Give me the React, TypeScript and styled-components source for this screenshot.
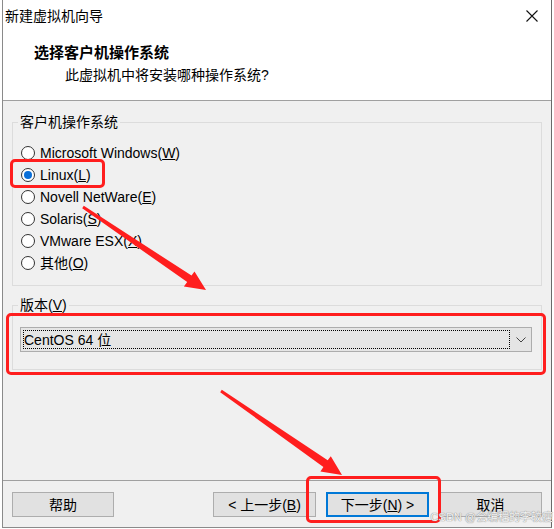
import React from "react";
import styled, { createGlobalStyle } from "styled-components";

const FONT = `"Liberation Sans", "Noto Sans CJK SC", sans-serif`;

const Global = createGlobalStyle`
  html, body { margin: 0; padding: 0; background: #ffffff; }
  body { font-family: ${FONT}; font-size: 14px; color: #000; }
  * { box-sizing: border-box; }
`;

const Stage = styled.div`
  position: relative;
  width: 554px;
  height: 529px;
  overflow: hidden;
`;

const Window = styled.div`
  margin-left: 2px;
  width: 550px;
  height: 528px;
  border: 1px solid #8a8a8a;
  border-top: none;
  border-right-color: #6a6a6a;
  background: #f0f0f0;
  display: flex;
  flex-direction: column;
`;

const TitleBar = styled.div`
  height: 31px;
  flex: none;
  background: #ffffff;
  display: flex;
  align-items: center;
  justify-content: space-between;
  padding: 0 13px 0 2px;
`;

const TitleText = styled.span`
  font-size: 14px;
  line-height: 18px;
  color: #000;
`;

const CloseIcon = styled.svg`
  width: 12px;
  height: 12px;
  display: block;
`;

const Header = styled.div`
  height: 70px;
  flex: none;
  background: #ffffff;
  border-bottom: 1px solid #a0a0a0;
  padding: 12px 0 0 31px;
`;

const HeaderTitle = styled.div`
  font-size: 15px;
  font-weight: bold;
  line-height: 20px;
`;

const HeaderSub = styled.div`
  font-size: 14px;
  line-height: 20px;
  margin: 2px 0 0 31px;
`;

const Body = styled.div`
  flex: 1;
  display: flex;
  flex-direction: column;
  gap: 9px;
  padding: 11px 9px 0;
`;

const Group = styled.fieldset<{ $pad: string }>`
  margin: 0;
  min-width: 0;
  border: 1px solid #dcdcdc;
  padding: ${(p) => p.$pad};
`;

const Legend = styled.legend<{ $shift: number }>`
  padding: 0 2px;
  margin-left: ${(p) => p.$shift}px;
  font-size: 14px;
  line-height: 20px;
  color: #000;
`;

const RadioRow = styled.label`
  height: 22px;
  display: flex;
  align-items: center;
  gap: 5px;
  font-size: 14px;
  line-height: 18px;
  white-space: nowrap;
`;

const RadioCircle = styled.span`
  width: 14px;
  height: 14px;
  flex: none;
  border: 1px solid #333333;
  border-radius: 50%;
  background: #ffffff;
  display: flex;
  align-items: center;
  justify-content: center;
`;

const RadioDot = styled.span`
  width: 8px;
  height: 8px;
  border-radius: 50%;
  background: #0a6fd8;
`;

const Combo = styled.div`
  height: 25px;
  border: 1px solid #adadad;
  background: #e5e5e5;
  display: flex;
`;

const ComboValue = styled.div`
  flex: 1;
  margin: 2px 0 2px 2px;
  border: 1px dotted #000;
  display: flex;
  align-items: center;
  padding-left: 0;
  font-size: 14px;
  line-height: 18px;
`;

const ComboArrow = styled.div`
  width: 21px;
  flex: none;
  display: flex;
  align-items: center;
  justify-content: center;
`;

const Footer = styled.div`
  height: 47px;
  flex: none;
  border-top: 1px solid #a0a0a0;
  padding: 11px 9px 0;
  display: flex;
  align-items: flex-start;
  gap: 10px;
`;

const Spacer = styled.div`
  flex: 1;
`;

const Button = styled.button<{ $primary?: boolean; $w: number }>`
  width: ${(p) => p.$w}px;
  height: 25px;
  margin: 0;
  padding: 0;
  font-family: ${FONT};
  font-size: 14px;
  line-height: 18px;
  color: #000;
  background: #e1e1e1;
  border: 1px solid ${(p) => (p.$primary ? "#0078d7" : "#adadad")};
  box-shadow: ${(p) => (p.$primary ? "inset 0 0 0 1px #0078d7" : "none")};
  border-radius: 0;
`;

const RedBox = styled.div<{ $x: number; $y: number; $w: number; $h: number }>`
  position: absolute;
  left: ${(p) => p.$x}px;
  top: ${(p) => p.$y}px;
  width: ${(p) => p.$w}px;
  height: ${(p) => p.$h}px;
  border: 3px solid #ff1e1e;
  border-radius: 5px;
  pointer-events: none;
`;

const ArrowLayer = styled.svg`
  position: absolute;
  left: 0;
  top: 0;
  width: 554px;
  height: 529px;
  pointer-events: none;
`;

const Watermark = styled.div`
  position: absolute;
  right: 1px;
  bottom: 5px;
  font-size: 11px;
  line-height: 14px;
  color: rgba(250, 250, 250, 0.95);
  text-shadow: 0 0 1px #8c8c8c, 0 0 1px #8c8c8c;
  white-space: nowrap;
  pointer-events: none;
`;

const options: { label: string; key: string; checked?: boolean }[] = [
  { label: "Microsoft Windows", key: "W" },
  { label: "Linux", key: "L", checked: true },
  { label: "Novell NetWare", key: "E" },
  { label: "Solaris", key: "S" },
  { label: "VMware ESX", key: "X" },
  { label: "其他", key: "O" },
];

export default function App() {
  return (
    <>
      <Global />
      <Stage>
        <Window>
          <TitleBar>
            <TitleText>新建虚拟机向导</TitleText>
            <CloseIcon viewBox="0 0 12 12">
              <path d="M0.5 0.5 L11.5 11.5 M11.5 0.5 L0.5 11.5" stroke="#111" strokeWidth="1.1" fill="none" />
            </CloseIcon>
          </TitleBar>
          <Header>
            <HeaderTitle>选择客户机操作系统</HeaderTitle>
            <HeaderSub>此虚拟机中将安装哪种操作系统?</HeaderSub>
          </Header>
          <Body>
            <Group $pad="10px 9px 11px 8px">
              <Legend $shift={-3}>客户机操作系统</Legend>
              {options.map((o) => (
                <RadioRow key={o.key}>
                  <RadioCircle>{o.checked && <RadioDot />}</RadioCircle>
                  <span>
                    {o.label}(<u>{o.key}</u>)
                  </span>
                </RadioRow>
              ))}
            </Group>
            <Group $pad="12px 9px 17px 7px">
              <Legend $shift={-2}>
                版本(<u>V</u>)
              </Legend>
              <Combo>
                <ComboValue>CentOS 64 位</ComboValue>
                <ComboArrow>
                  <svg width="10" height="6" viewBox="0 0 10 6">
                    <path d="M0.5 0.5 L5 5 L9.5 0.5" stroke="#444" strokeWidth="1" fill="none" />
                  </svg>
                </ComboArrow>
              </Combo>
            </Group>
          </Body>
          <Footer>
            <Button $w={102}>帮助</Button>
            <Spacer />
            <Button $w={103}>
              &lt; 上一步(<u>B</u>)
            </Button>
            <Button $w={103} $primary>
              下一步(<u>N</u>) &gt;
            </Button>
            <Button $w={103}>取消</Button>
          </Footer>
        </Window>

        <RedBox $x={10} $y={159} $w={95} $h={29} />
        <RedBox $x={6} $y={313} $w={540} $h={62} />
        <RedBox $x={306} $y={476} $w={135} $h={47} />

        <ArrowLayer viewBox="0 0 554 529">
          <polygon
            fill="#ff1e1e"
            points="82.2,208.2 187.2,282.1 183.9,286.6 206,290 194.5,271.5 191.5,275.6 83.8,205.8"
          />
          <polygon
            fill="#ff1e1e"
            points="220.2,392.2 323.4,466.9 320.4,471.4 342,475 330.8,456.2 327.7,460.3 221.8,389.8"
          />
        </ArrowLayer>

        <Watermark>CSDN @会编程的李较瘦</Watermark>
      </Stage>
    </>
  );
}
